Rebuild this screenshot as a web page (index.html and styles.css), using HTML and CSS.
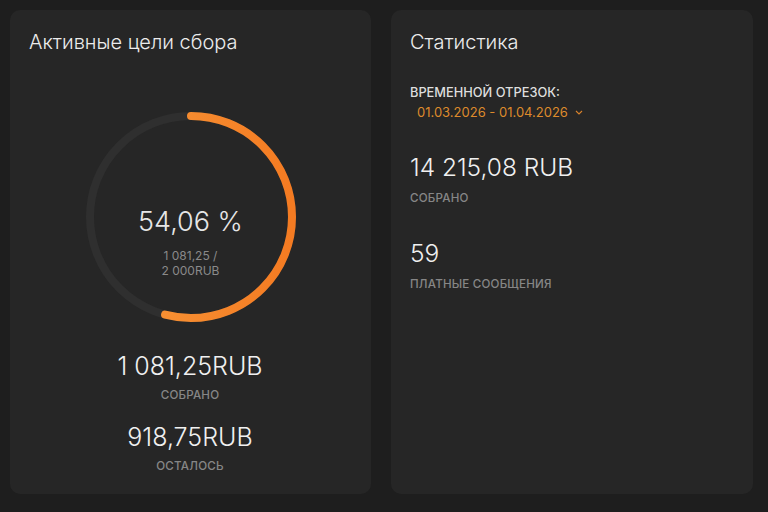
FILE: index.html
```html
<!DOCTYPE html>
<html lang="ru">
<head>
<meta charset="utf-8">
<link rel="stylesheet" href="styles.css">
</head>
<body>
<div class="page">
  <section class="card goals">
    <h2 class="card-title">Активные цели сбора</h2>
    <div class="ring">
      <svg class="ring-svg" width="216" height="216" viewBox="0 0 216 216">
        <defs>
          <linearGradient id="g" x1="0" y1="0" x2="0" y2="1">
            <stop offset="0" stop-color="#f89a3b"/>
            <stop offset="1" stop-color="#f47b22"/>
          </linearGradient>
        </defs>
        <circle cx="108" cy="108" r="101" fill="none" stroke="#2f2f2f" stroke-width="8"/>
        <circle cx="108" cy="108" r="101" fill="none" stroke="url(#g)" stroke-width="8" stroke-linecap="round"
          stroke-dasharray="343.06 634.6" transform="rotate(-90 108 108)"/>
      </svg>
      <div class="ring-center">
        <div class="ring-pct">54,06 %</div>
        <div class="ring-sub">1 081,25 /<br>2 000RUB</div>
      </div>
    </div>
    <div class="goal-stat">
      <div class="goal-value">1 081,25RUB</div>
      <div class="label">СОБРАНО</div>
    </div>
    <div class="goal-stat">
      <div class="goal-value">918,75RUB</div>
      <div class="label">ОСТАЛОСЬ</div>
    </div>
  </section>
  <section class="card stats">
    <h2 class="card-title">Статистика</h2>
    <div class="period">
      <div class="period-label">ВРЕМЕННОЙ ОТРЕЗОК:</div>
      <div class="period-value">01.03.2026 - 01.04.2026
        <svg class="chev" width="8" height="5" viewBox="0 0 8 5"><path d="M1 1l3 3 3-3" fill="none" stroke="#d9822b" stroke-width="1.1"/></svg>
      </div>
    </div>
    <div class="stat">
      <div class="stat-value">14 215,08 RUB</div>
      <div class="label">СОБРАНО</div>
    </div>
    <div class="stat">
      <div class="stat-value">59</div>
      <div class="label">ПЛАТНЫЕ СООБЩЕНИЯ</div>
    </div>
  </section>
</div>
</body>
</html>
```
FILE: styles.css
```css
* { box-sizing: border-box; }
html, body { margin: 0; background: #1e1e1e; }
body {
  font-family: Inter, "Noto Sans", sans-serif;
  color: #eaeaea;
  width: 768px;
  height: 512px;
  overflow: hidden;
}
.page {
  display: grid;
  grid-template-columns: 361px 362px;
  gap: 20px;
  padding: 10px;
  height: 504px;
}
.card {
  background: #262626;
  border-radius: 10px;
  padding: 20px 20px 0 19px;
}
.card-title {
  margin: 0;
  font-size: 20px;
  font-weight: 300;
  line-height: 24px;
  color: #ececec;
}
.goals { display: flex; flex-direction: column; align-items: center; }
.goals .card-title { align-self: flex-start; }
.ring {
  position: relative;
  width: 216px;
  height: 216px;
  margin-top: 55px;
  margin-left: 1px;
}
.ring-svg { display: block; }
.ring-center {
  position: absolute;
  inset: 0;
  display: flex;
  flex-direction: column;
  align-items: center;
  justify-content: center;
  padding-top: 51px;
}
.ring-pct {
  font-size: 27px;
  font-weight: 300;
  line-height: 30px;
  color: #e6e6e6;
}
.ring-sub {
  margin-top: 11px;
  font-size: 12px;
  line-height: 15px;
  text-align: center;
  color: #8a8a8a;
}
.goal-stat { display: flex; flex-direction: column; align-items: center; }
.ring + .goal-stat { margin-top: 26px; }
.goal-stat + .goal-stat { margin-top: 20px; }
.goal-value {
  font-size: 25px;
  font-weight: 300;
  line-height: 30px;
  color: #f0f0f0;
}
.label {
  font-size: 11.6px;
  font-weight: 500;
  line-height: 14px;
  color: #868686;
  letter-spacing: 0.2px;
  margin-top: 7px;
}
.period { margin-top: 31px; }
.period-label {
  font-size: 12.8px;
  font-weight: 500;
  line-height: 15px;
  color: #dedede;
}
.period-value {
  margin-top: 4px;
  padding-left: 7px;
  font-size: 13px;
  line-height: 16px;
  color: #dd8a2c;
  display: flex;
  align-items: center;
  gap: 7px;
}
.stat { margin-top: 33px; }
.stat + .stat { margin-top: 34px; }
.stat-value {
  font-size: 24.5px;
  font-weight: 300;
  line-height: 28px;
  color: #f0f0f0;
}
.stat .label { margin-top: 10px; }
```
